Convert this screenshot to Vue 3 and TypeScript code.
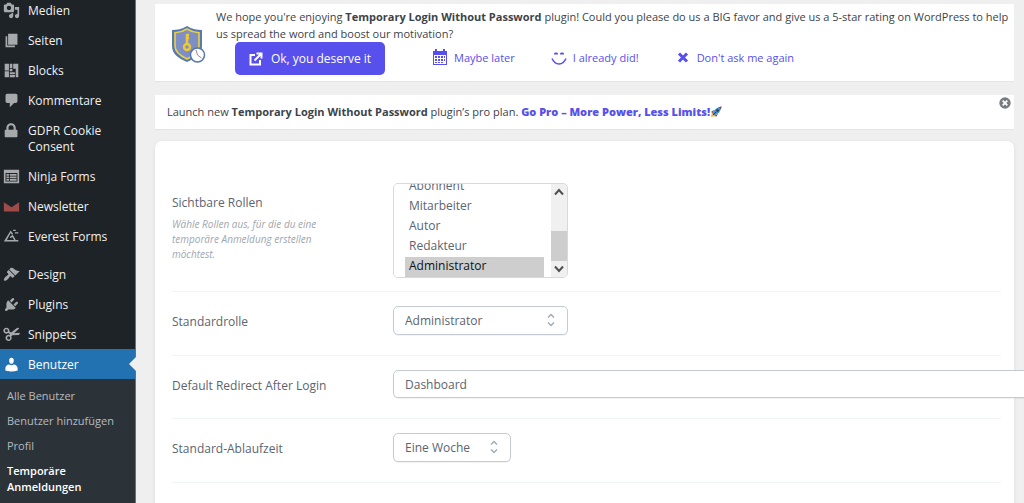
<script setup lang="ts">
import { ref } from 'vue'

interface MenuItem {
  label: string
  icon: string
  current?: boolean
}

const contentMenu: MenuItem[] = [
  { label: 'Medien', icon: 'media' },
  { label: 'Seiten', icon: 'page' },
  { label: 'Blocks', icon: 'blocks' },
  { label: 'Kommentare', icon: 'comment' },
  { label: 'GDPR Cookie Consent', icon: 'lock' },
  { label: 'Ninja Forms', icon: 'form' },
  { label: 'Newsletter', icon: 'mail' },
  { label: 'Everest Forms', icon: 'everest' },
]

const systemMenu: MenuItem[] = [
  { label: 'Design', icon: 'brush' },
  { label: 'Plugins', icon: 'plug' },
  { label: 'Snippets', icon: 'scissors' },
  { label: 'Benutzer', icon: 'user', current: true },
]

const sections = [contentMenu, systemMenu]
const userMenu = ['Alle Benutzer', 'Benutzer hinzufügen', 'Profil', 'Temporäre Anmeldungen']

const iconPaths: Record<string, string> = {
  media: 'M13 11V4c0-.55-.45-1-1-1h-1.67L9 1H5L3.67 3H2c-.55 0-1 .45-1 1v7c0 .55.45 1 1 1h10c.55 0 1-.45 1-1zM7 4.5c1.38 0 2.5 1.12 2.5 2.5S8.38 9.5 7 9.5 4.5 8.38 4.5 7 5.62 4.5 7 4.5zM14 6h5v10.5c0 1.38-1.12 2.5-2.5 2.5S14 17.88 14 16.5s1.12-2.5 2.5-2.5c.17 0 .34.02.5.05V9h-3V6zm-4 8.05V13h2v3.5c0 1.38-1.12 2.5-2.5 2.5S7 17.88 7 16.5 8.12 14 9.5 14c.17 0 .34.02.5.05z',
  page: 'M6 15V2h11v13H6zm-1 1h9v2H3V5h2v11z',
  blocks: 'M2 2h5v8H2zM8 2h3v5H8zM12 2h6v16h-3V8h-3zM2 11h5v7H2zM8 8h3v3H8zM8 12h6v2H8zM8 15h6v3H8z',
  comment: 'M5 2h10c1.1 0 2 .9 2 2v7c0 1.1-.9 2-2 2h-2l-5 5v-5H5c-1.1 0-2-.9-2-2V4c0-1.1.9-2 2-2z',
  lock: 'M15 9h1c.55 0 1 .45 1 1v7c0 .55-.45 1-1 1H3c-.55 0-1-.45-1-1v-7c0-.55.45-1 1-1h1V6.5C4 4 6.500 1.500 9.500 1.500S15 4 15 6.500V9zm-2.500 0V6.500c0-1.500-1.300-2.700-3-2.700s-3 1.200-3 2.700V9h6z',
  form: 'M1 2h18v16H1zM3 6v10h14V6zM4 7h3v2H4zM8 7h8v2H8zM4 10h3v2H4zM8 10h8v2H8zM4 13h3v2H4zM8 13h8v2H8z',
  mail: 'M1 5l9 6 9-6v11H1z',
  everest: 'M1 16L9 3l3 4-1.500 1L9 6 4.500 14H13l-2-3.500-2 1.500-1-1.500L11.500 8 15 14h3v2zM12 2h3v1.500h-3zM14 5h4v1.500h-4z',
  brush: 'M14.480 11.060L7.410 3.990l1.500-1.500c.5-.56 2.300-.47 3.510.32 1.210.8 1.430 1.280 2.910 2.100 1.180.64 2.450 1.260 4.450.85zm-.71.71L6.700 4.700 4.930 6.470c-.39.39-.39 1.020 0 1.410l1.060 1.060c.39.39.39 1.030 0 1.420-.6.6-1.430 1.110-2.210 1.690-.35.26-.7.53-1.010.84C1.430 14.230.4 16.080 1.400 17.070c.99 1 2.840-.03 4.180-1.360.31-.31.58-.66.85-1.020.57-.78 1.080-1.610 1.690-2.210.39-.39 1.020-.39 1.410 0l1.060 1.060c.39.39 1.020.39 1.410 0z',
  plug: 'M13.110 4.360L9.870 7.600 8 5.730l3.240-3.240c.35-.34 1.050-.2 1.560.32.52.51.66 1.210.31 1.550zm-8 1.770l.91-1.120 9.010 9.010-1.190.84c-.71.71-2.630 1.160-3.820 1.160H6.140L4.900 17.260c-.59.59-1.540.59-2.120 0-.59-.58-.59-1.530 0-2.120l1.240-1.240v-3.880c0-1.130.4-3.190 1.090-3.890zm7.260 3.970l3.240-3.240c.34-.35 1.040-.21 1.550.31.52.51.66 1.210.31 1.550l-3.240 3.250z',
  scissors: 'M4 2a3.500 3.500 0 0 1 3.400 4.200L9.500 7.500 16 2.500c1-.7 2.500-.5 3 .3L13 8.500l6.500-.5c.6 1.300-.5 2.600-1.800 2.700L11 11l-1.300 1.300a3.600 3.600 0 1 1-2-1.700L8 9.500 6 8.300A3.500 3.500 0 1 1 4 2zm0 1.800a1.700 1.700 0 1 0 0 3.400 1.700 1.700 0 0 0 0-3.400zM6.700 12.200a1.800 1.800 0 1 0 0 3.600 1.800 1.800 0 0 0 0-3.600z',
  user: 'M10 9.250c-2.270 0-2.730-3.440-2.730-3.440C7 4.020 7.820 2 9.970 2c2.160 0 2.980 2.020 2.710 3.810 0 0-.41 3.440-2.680 3.440zM12.720 10c2.390 0 4.520 2.330 4.520 4.530v2.490s-3.650 1.130-7.240 1.130c-3.650 0-7.240-1.130-7.240-1.130v-2.490c0-2.250 1.940-4.480 4.470-4.480q2.770 1.800 5.490-.05z',
}

const roles = ['Abonnent', 'Mitarbeiter', 'Autor', 'Redakteur', 'Administrator']
const visibleRoles = ref<string[]>(['Administrator'])
const defaultRole = ref('Administrator')
const redirect = ref('Dashboard')
const expiry = ref('Eine Woche')
</script>

<template>
  <div class="page">
    <nav class="sidebar" aria-label="Hauptmenü">
      <ul v-for="(section, i) in sections" :key="i" class="menu">
        <li v-for="item in section" :key="item.label">
          <a href="#" class="menu-link" :class="{ current: item.current }">
            <svg class="menu-icon" :class="item.icon" viewBox="0 0 20 20" aria-hidden="true">
              <path :d="iconPaths[item.icon]" fill-rule="evenodd" />
            </svg>
            <span>{{ item.label }}</span>
          </a>
        </li>
      </ul>
      <ul class="submenu">
        <li v-for="(label, i) in userMenu" :key="label">
          <a href="#" :class="{ active: i === 3 }">{{ label }}</a>
        </li>
      </ul>
    </nav>

    <main class="content">
      <section class="notice rating">
        <svg class="shield" viewBox="0 0 36 40" aria-hidden="true">
          <path d="M16 1C11 4 6 5 1 5v16c0 8 6 12 15 16 9-4 15-8 15-16V5C26 5 21 4 16 1z" fill="#5878b0" />
          <path d="M16 4C12 6.500 8 7.500 4 7.800V21c0 6 4.500 9.500 12 13 7.500-3.500 12-7 12-13V7.800C24 7.500 20 6.500 16 4z" fill="#7d8fc6" stroke="#ecd13f" stroke-width="1.600" />
          <path d="M16 9v13M16 10h2M16 13h2" stroke="#f0c92f" stroke-width="2.500" />
          <circle cx="16" cy="22" r="3" fill="#7d8fc6" stroke="#f0c92f" stroke-width="2.400" />
          <circle cx="26.500" cy="30" r="7" fill="#fff" stroke="#5576ab" stroke-width="1.500" />
          <path d="M25 25l1.500 5 4 3" fill="none" stroke="#a08290" stroke-width="1" />
        </svg>
        <div class="rating-body">
          <p>We hope you're enjoying <strong>Temporary Login Without Password</strong> plugin! Could you please do us a BIG favor and give us a 5-star rating on WordPress to help us spread the word and boost our motivation?</p>
          <div class="actions">
            <a href="#" class="primary">
              <svg viewBox="0 0 14 14" aria-hidden="true"><path d="M6 3H1.500v9.500H11V8M7.500 1.500h5v5M12 2L5.500 8.500" /></svg>
              Ok, you deserve it
            </a>
            <a href="#" class="later">
              <svg viewBox="0 0 16 16" aria-hidden="true"><path fill-rule="evenodd" d="M1 2h2V0h2v2h6V0h2v2h2v14H1zM2 6v9h12V6z" /><path d="M3 7h2v2H3zM6 7h2v2H6zM9 7h2v2H9zM12 7h1v2h-1zM3 10h2v2H3zM6 10h2v2H6zM9 10h2v2H9zM12 10h1v2h-1zM3 13h2v1H3zM6 13h2v1H6zM9 13h2v1H9z" /></svg>
              Maybe later
            </a>
            <a href="#" class="did">
              <svg viewBox="0 0 16 16" aria-hidden="true"><path d="M3 5.500v-1l1-1h2l1 1v1zM9 5.500v-1l1-1h2l1 1v1z" /><path d="M1 9.500q2.500 5.500 7 5.500t7-5.500" fill="none" stroke="currentColor" stroke-width="1.500" /></svg>
              I already did!
            </a>
            <a href="#" class="never">
              <svg viewBox="0 0 16 16" aria-hidden="true"><path d="M4 4.500l8 8M12 4.500l-8 8" fill="none" stroke="currentColor" stroke-width="3" /></svg>
              Don't ask me again
            </a>
          </div>
        </div>
      </section>

      <section class="notice promo">
        <p>Launch new <strong>Temporary Login Without Password</strong> plugin’s pro plan.
          <a href="#">Go Pro – More Power, Less Limits!</a>
          <svg class="rocket" viewBox="0 0 12 12" aria-hidden="true">
            <path d="M1 11l1-5 4 4z" fill="#f6b93b" />
            <path d="M4 4L1 6l2 1zM8 8l-2 3-1-2z" fill="#a8323e" />
            <path d="M2.500 7.500C4 3.500 7 1 11.500.5 11 5 8.500 8 4.500 9.500z" fill="#4291c9" />
            <path d="M9 1.200l2.500-.7L11 3z" fill="#a8323e" />
            <circle cx="7.500" cy="4.500" r="1.300" fill="#27374d" />
            <path d="M3 9l3-3" stroke="#6b2534" />
          </svg>
        </p>
        <button type="button" class="dismiss" aria-label="Ausblenden">
          <svg viewBox="0 0 12 12" aria-hidden="true"><circle cx="6" cy="6" r="5.700" fill="#787c82" /><path d="M3.700 3.700l4.600 4.600M8.300 3.700L3.700 8.300" stroke="#fff" stroke-width="1.800" /></svg>
        </button>
      </section>

      <form class="settings" @submit.prevent>
        <div class="row">
          <div class="label-cell first">
            <label for="visible-roles">Sichtbare Rollen</label>
            <p>Wähle Rollen aus, für die du eine temporäre Anmeldung erstellen möchtest.</p>
          </div>
          <div class="listbox">
            <select id="visible-roles" v-model="visibleRoles" multiple size="5">
              <option v-for="role in roles" :key="role" :value="role">{{ role }}</option>
            </select>
            <div class="scrollbar" aria-hidden="true">
              <svg viewBox="0 0 16 16"><path d="M4 10.500L8 6l4 4.500" /></svg>
              <div class="track"><div class="thumb"></div></div>
              <svg viewBox="0 0 16 16"><path d="M4 5.500L8 10l4-4.500" /></svg>
            </div>
          </div>
        </div>
        <div class="row">
          <div class="label-cell"><label for="default-role">Standardrolle</label></div>
          <div class="select wide">
            <select id="default-role" v-model="defaultRole">
              <option v-for="role in roles" :key="role">{{ role }}</option>
            </select>
            <svg viewBox="0 0 10 14" aria-hidden="true"><path d="M2 4.500L5 1.500l3 3M2 9.500l3 3 3-3" /></svg>
          </div>
        </div>
        <div class="row">
          <div class="label-cell"><label for="redirect">Default Redirect After Login</label></div>
          <div class="select full">
            <select id="redirect" v-model="redirect"><option>Dashboard</option></select>
          </div>
        </div>
        <div class="row">
          <div class="label-cell"><label for="expiry">Standard-Ablaufzeit</label></div>
          <div class="select narrow">
            <select id="expiry" v-model="expiry"><option>Eine Woche</option></select>
            <svg viewBox="0 0 10 14" aria-hidden="true"><path d="M2 4.500L5 1.500l3 3M2 9.500l3 3 3-3" /></svg>
          </div>
        </div>
        <div class="row"></div>
      </form>
    </main>
  </div>
</template>

<style>
body {
  margin: 0;
  background: #efefef;
}
</style>

<style scoped>
* {
  box-sizing: border-box;
}
.page {
  display: flex;
  height: 100vh;
  overflow: hidden;
  font-family: "Open Sans", "Noto Sans", sans-serif;
  font-size: 11px;
  line-height: 16px;
  color: #3c434a;
}
p, ul {
  margin: 0;
  padding: 0;
  list-style: none;
}
a {
  text-decoration: none;
}
.sidebar {
  flex: none;
  width: 136px;
  background: #1d2327;
  border-right: 1px solid #6d7175;
}
.menu {
  margin-bottom: 8px;
}
.menu:first-child {
  margin-top: -5px;
}
.menu:nth-child(2) {
  margin-bottom: 0;
}
.menu-link {
  position: relative;
  display: flex;
  gap: 8px;
  padding: 8px 24px 6px 3px;
  color: #f0f0f1;
  font-size: 12px;
}
.menu-icon {
  flex: 0 0 17px;
  height: 17px;
  margin: -1px 0 0;
  fill: #a7aaad;
}
.menu-icon.mail {
  fill: #a04a4a;
}
.current {
  background: #2271b1;
  color: #fff;
}
.current .menu-icon {
  fill: #fff;
}
.current::after {
  content: "";
  position: absolute;
  right: -1px;
  top: 8px;
  border: 7px solid transparent;
  border-right-color: #efefef;
  border-left: 0;
}
.submenu {
  background: #2c3338;
  padding: 5px 0 8px;
}
.submenu a {
  display: block;
  padding: 4px 7px 5px;
  color: #b5bac0;
}
.submenu .active {
  padding-right: 40px;
  color: #fff;
  font-weight: 600;
}
.content {
  flex: 1;
  min-width: 0;
  padding: 4px 10px 0 19px;
}
.notice {
  background: #fff;
  box-shadow: 0 1px 1px #0000000a;
}
.rating {
  display: flex;
  gap: 9px;
  padding: 4px 0 6px 16px;
  margin-bottom: 14px;
}
.shield {
  flex: 0 0 36px;
  height: 40px;
  margin-top: 17px;
}
.rating-body {
  flex: 1;
  line-height: 17px;
}
.actions {
  display: flex;
  margin-left: 19px;
}
.actions a {
  display: flex;
  align-items: center;
  gap: 6px;
  color: #5850ec;
  height: 30px;
  white-space: nowrap;
}
.actions svg {
  width: 16px;
  height: 16px;
  fill: currentColor;
}
.actions .primary {
  width: 150px;
  height: 33px;
  justify-content: center;
  gap: 8px;
  border-radius: 5px;
  background: #5850ec;
  color: #fff;
  font-size: 12px;
}
.primary svg {
  width: 14px;
  height: 14px;
  fill: none;
  stroke: #fff;
  stroke-width: 2;
}
.later {
  margin-left: 47px;
}
.did,
.never {
  margin-left: 36px;
}
.promo {
  display: flex;
  justify-content: space-between;
  height: 34px;
  padding: 0 3px 0 12px;
  margin-bottom: 12px;
  line-height: 34px;
}
.promo a {
  color: #5850ec;
  font-weight: 800;
}
.rocket {
  width: 12px;
  height: 12px;
  vertical-align: -2px;
}
.dismiss {
  width: 12px;
  height: 12px;
  margin-top: 2px;
  padding: 0;
  border: 0;
  background: none;
}
.dismiss svg {
  display: block;
}
.settings {
  padding: 28px 13px 40px 17px;
  border-radius: 7px;
  background: #fff;
  box-shadow: 0 1px 4px #00000014;
  color: #5b6470;
  font-size: 12px;
}
.row {
  display: flex;
  padding: 14px 0 20px;
  border-bottom: 1px solid #f1f3f6;
}
.row:first-child {
  padding-bottom: 13px;
}
.row:last-child {
  border: 0;
}
.label-cell {
  flex: 0 0 221px;
  padding-top: 8px;
}
.label-cell.first {
  padding-top: 12px;
}
.label-cell p {
  width: 160px;
  margin-top: 6px;
  color: #a0a6b0;
  font-size: 10px;
  font-style: italic;
  line-height: 15px;
}
select {
  margin: 0;
  border: 0;
  outline: 0;
  background: #fff;
  color: #5b6470;
  font-family: inherit;
  font-size: 12px;
}
.listbox {
  display: flex;
  align-items: flex-end;
  width: 175px;
  height: 95px;
  overflow: hidden;
  border: 1px solid #d5d9e0;
  border-radius: 5px;
}
.listbox select {
  flex: 1;
  height: 97px;
  padding: 0 7px 0 11px;
  overflow: hidden;
}
.listbox option {
  height: 20px;
  min-height: 20px;
  padding: 0 4px;
  line-height: 20px;
}
.scrollbar {
  display: flex;
  flex-direction: column;
  width: 16px;
  height: 93px;
  background: #f0f0f0;
}
.scrollbar svg {
  height: 16px;
  fill: none;
  stroke: #505050;
  stroke-width: 2;
}
.track {
  flex: 1;
  display: flex;
  align-items: flex-end;
}
.thumb {
  width: 100%;
  height: 30px;
  background: #cdcdcd;
}
.select {
  position: relative;
  flex: none;
}
.select select {
  display: block;
  width: 100%;
  height: 29px;
  padding: 0 11px;
  border: 1px solid #c5cad3;
  border-radius: 5px;
  appearance: none;
  box-shadow: 0 1px 1px #0000000d;
}
.select svg {
  position: absolute;
  right: 12px;
  top: 7px;
  width: 10px;
  height: 14px;
  fill: none;
  stroke: #a5abb5;
  stroke-width: 1.500;
}
.wide {
  width: 175px;
}
.narrow {
  width: 118px;
}
.full {
  width: 100%;
}
.full select {
  height: 28px;
}
</style>
